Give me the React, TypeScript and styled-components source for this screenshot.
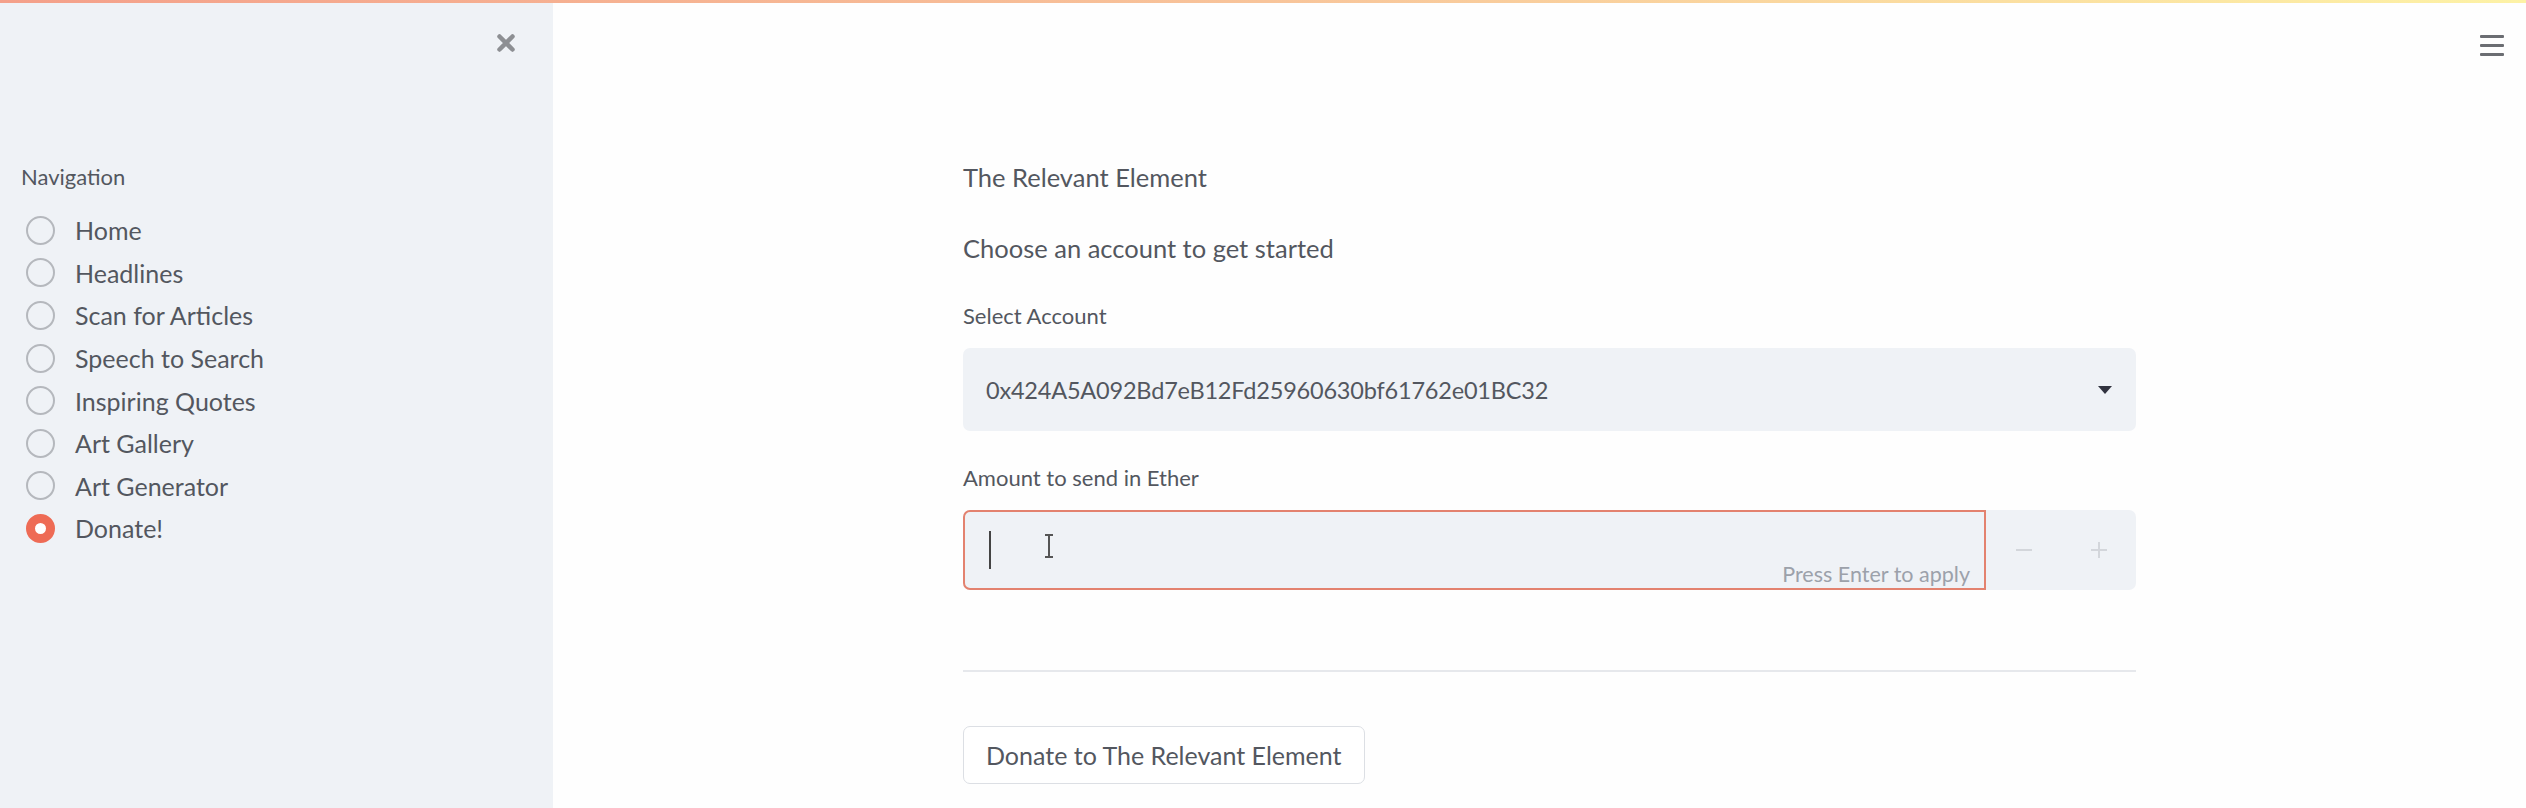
import * as React from 'react'
import styled, { createGlobalStyle } from 'styled-components'

const GlobalStyle = createGlobalStyle`
  html, body {
    margin: 0;
    padding: 0;
    background: #fefefe;
  }
  body {
    font-family: Lato, "Noto Sans", "Liberation Sans", sans-serif;
    color: #53575f;
  }
`

const Page = styled.div`
  position: relative;
  display: flex;
  width: 2526px;
  height: 808px;
  overflow: hidden;
`

// thin decoration bar across the very top, sits over sidebar and main
const Decoration = styled.div`
  position: absolute;
  top: 0;
  left: 0;
  right: 0;
  height: 3px;
  background: linear-gradient(90deg, #f4a08a, #f8c49a 50%, #fdf2a6);
  z-index: 2;
`

const Sidebar = styled.aside`
  width: 553px;
  flex-shrink: 0;
  background: #eff2f6;
  display: flex;
  flex-direction: column;
`

const SidebarHeader = styled.div`
  height: 86px;
  display: flex;
  align-items: center;
  justify-content: flex-end;
  padding-right: 36px;
`

const CloseButton = styled.button`
  background: none;
  border: none;
  padding: 0;
  width: 22px;
  height: 22px;
  display: flex;
  align-items: center;
  justify-content: center;
  cursor: pointer;
`

const NavSection = styled.div`
  margin-top: 76px;
  padding-left: 21px;
`

const NavLabel = styled.div`
  font-size: 22px;
  line-height: 30px;
  margin-bottom: 17px;
`

const RadioList = styled.div`
  display: flex;
  flex-direction: column;
`

const RadioRow = styled.label`
  display: flex;
  align-items: center;
  height: 42.6px;
  font-size: 25px;
  cursor: pointer;
`

const RadioCircle = styled.span<{ $checked: boolean }>`
  box-sizing: border-box;
  width: 29px;
  height: 29px;
  margin-left: 5px;
  margin-right: 20px;
  border-radius: 50%;
  flex-shrink: 0;
  border: ${(p) => (p.$checked ? '9px solid #ee6b55' : '2.5px solid #b5b8bd')};
  background: ${(p) => (p.$checked ? '#fff' : 'transparent')};
`

const Main = styled.main`
  flex: 1;
  display: flex;
  flex-direction: column;
  padding-left: 20px;
`

const Toolbar = styled.div`
  height: 90px;
  display: flex;
  align-items: center;
  justify-content: flex-end;
  padding-right: 22px;
`

const MenuButton = styled.button`
  background: none;
  border: none;
  padding: 0;
  width: 24px;
  display: flex;
  flex-direction: column;
  gap: 6px;
  cursor: pointer;
`

const MenuLine = styled.span`
  display: block;
  height: 3px;
  background: #6b6d72;
  border-radius: 1px;
`

const Content = styled.div`
  width: 1173px;
  margin: 66px auto 0;
  display: flex;
  flex-direction: column;
`

const Text = styled.p<{ $gap: number }>`
  margin: 0 0 ${(p) => p.$gap}px;
  font-size: 25.5px;
  line-height: 42px;
`

const WidgetLabel = styled.div`
  font-size: 22px;
  line-height: 30px;
  margin-bottom: 17px;
`

const SelectBox = styled.div`
  height: 83px;
  background: #eff2f6;
  border-radius: 7px;
  display: flex;
  align-items: center;
  justify-content: space-between;
  padding: 0 24px 0 23px;
  margin-bottom: 32px;
  font-size: 23.5px;
  letter-spacing: -0.2px;
`

const NumberRow = styled.div`
  height: 80px;
  display: flex;
  background: #eff2f6;
  border-radius: 7px;
`

const NumberField = styled.div`
  position: relative;
  flex: 1;
  box-sizing: border-box;
  border: 2px solid #e3826f;
  border-radius: 7px 0 0 7px;
  display: flex;
  align-items: center;
  padding-left: 24px;
`

const TextCaret = styled.span`
  width: 2px;
  height: 38px;
  background: #444;
`

const Hint = styled.span`
  position: absolute;
  right: 14px;
  bottom: 1px;
  font-size: 21.5px;
  color: #9ca1aa;
`

const MouseCursor = styled.svg`
  position: absolute;
  left: 78px;
  top: 22px;
`

const StepButton = styled.button`
  width: 75px;
  background: none;
  border: none;
  display: flex;
  align-items: center;
  justify-content: center;
  padding: 0;
`

const Divider = styled.hr`
  border: none;
  height: 2px;
  background: #e6e8ec;
  margin: 80px 0 54px;
`

const DonateButton = styled.button`
  align-self: flex-start;
  height: 58px;
  padding: 0 22px;
  background: #fff;
  border: 1.5px solid #dcdfe4;
  border-radius: 7px;
  font-family: inherit;
  font-size: 25px;
  color: #53575f;
  cursor: pointer;
`

const pages = [
  'Home',
  'Headlines',
  'Scan for Articles',
  'Speech to Search',
  'Inspiring Quotes',
  'Art Gallery',
  'Art Generator',
  'Donate!',
]

export default function App() {
  const [page, setPage] = React.useState('Donate!')

  return (
    <>
      <GlobalStyle />
      <Page>
        <Decoration />
        <Sidebar>
          <SidebarHeader>
            <CloseButton aria-label="Close sidebar">
              <svg width="18" height="18" viewBox="0 0 18 18">
                <path d="M2.5 2.5 L15.5 15.5 M15.5 2.5 L2.5 15.5" stroke="#8d8f93" strokeWidth="4.5" strokeLinecap="round" />
              </svg>
            </CloseButton>
          </SidebarHeader>
          <NavSection>
            <NavLabel>Navigation</NavLabel>
            <RadioList>
              {pages.map((p) => (
                <RadioRow key={p} onClick={() => setPage(p)}>
                  <RadioCircle $checked={p === page} />
                  {p}
                </RadioRow>
              ))}
            </RadioList>
          </NavSection>
        </Sidebar>

        <Main>
          <Toolbar>
            <MenuButton aria-label="Menu">
              <MenuLine />
              <MenuLine />
              <MenuLine />
            </MenuButton>
          </Toolbar>
          <Content>
            <Text $gap={29}>The Relevant Element</Text>
            <Text $gap={32}>Choose an account to get started</Text>

            <WidgetLabel>Select Account</WidgetLabel>
            <SelectBox>
              <span>0x424A5A092Bd7eB12Fd25960630bf61762e01BC32</span>
              <svg width="14" height="8" viewBox="0 0 14 8">
                <path d="M0 0 H14 L7 8 Z" fill="#31333f" />
              </svg>
            </SelectBox>

            <WidgetLabel>Amount to send in Ether</WidgetLabel>
            <NumberRow>
              <NumberField>
                <TextCaret />
                <MouseCursor width="12" height="24" viewBox="0 0 12 24">
                  <path d="M2 1 H10 M6 1 V23 M2 23 H10" stroke="#555" strokeWidth="2" fill="none" />
                </MouseCursor>
                <Hint>Press Enter to apply</Hint>
              </NumberField>
              <StepButton aria-label="Decrement">
                <svg width="16" height="4" viewBox="0 0 16 4">
                  <path d="M0 2 H16" stroke="#d3d6db" strokeWidth="2" />
                </svg>
              </StepButton>
              <StepButton aria-label="Increment">
                <svg width="16" height="16" viewBox="0 0 16 16">
                  <path d="M0 8 H16 M8 0 V16" stroke="#d3d6db" strokeWidth="2" />
                </svg>
              </StepButton>
            </NumberRow>

            <Divider />
            <DonateButton>Donate to The Relevant Element</DonateButton>
          </Content>
        </Main>
      </Page>
    </>
  )
}
